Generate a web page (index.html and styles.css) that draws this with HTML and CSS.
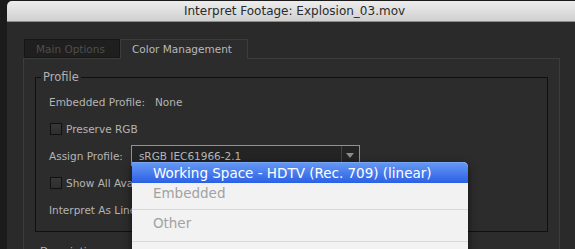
FILE: index.html
```html
<!DOCTYPE html>
<html>
<head>
	<title>Interpret Footage</title>
	<link rel="stylesheet" href="styles.css">
</head>
<body>
	<div class="desk">
		<div class="window">
			<div class="titlebar">Interpret Footage: Explosion_03.mov</div>
			<div class="content">
				<div class="tabs">
					<div class="tab tab-main">Main Options</div>
					<div class="tab tab-color">Color Management</div>
				</div>
				<div class="panel">
					<fieldset class="group">
						<legend>Profile</legend>
						<div class="row">
							<span class="label">Embedded Profile:</span>
							<span class="value">None</span>
						</div>
						<div class="row">
							<span class="check"></span>Preserve RGB
						</div>
						<div class="row">
							<span class="label">Assign Profile:</span>
							<div class="select">
								<span class="select-text">sRGB IEC61966-2.1</span>
								<span class="select-arrow"></span>
								<div class="menu">
									<div class="menu-item selected">Working Space - HDTV (Rec. 709) (linear)</div>
									<div class="menu-item disabled">Embedded</div>
									<div class="menu-sep"></div>
									<div class="menu-item disabled">Other</div>
									<div class="menu-sep last"></div>
									<div class="menu-item"><b>Adobe</b> <span class="dim">HDTV (Rec. 709)</span></div>
								</div>
							</div>
						</div>
						<div class="row">
							<span class="check"></span>Show All Available Profiles
						</div>
						<div class="row">
							<span class="label">Interpret As Linear Light:</span>
						</div>
					</fieldset>
					<div class="section">Description</div>
				</div>
			</div>
		</div>
	</div>
</body>
</html>
```

FILE: styles.css
```css
* {
	box-sizing: border-box;
}

body {
	margin: 0;
	width: 575px;
	height: 249px;
	overflow: hidden;
	background-color: #1b1b1b;
	font-family: "DejaVu Sans", sans-serif;
	font-size: 10.5px;
	color: #b4b4b4;
}

.desk {
	padding: 1px 0 0 7px;
}

.window {
	width: 575px;
	height: 260px;
	background-color: #2a2a2a;
	border-radius: 5px 0 0 0;
	overflow: hidden;
}

.titlebar {
	height: 21px;
	line-height: 20px;
	text-align: center;
	font-size: 12px;
	color: #2a2a2a;
	background: linear-gradient(#ededed, #d0d0d0);
	border-bottom: 1px solid #8c8c8c;
}

.content {
	padding: 17px 0 0 16px;
}

.tabs {
	display: flex;
	margin-left: 1px;
	height: 19px;
}

.tab {
	height: 19px;
	line-height: 18px;
	padding-left: 11px;
}

.tab-main {
	width: 96px;
	background-color: #1f1f1f;
	border: 1px solid #161616;
	color: #4e4e4e;
}

.tab-color {
	width: 128px;
	height: 20px;
	background-color: #2c2c2c;
	border: 1px solid #3c3c3c;
	border-bottom: none;
	color: #b8b8b8;
}

.panel {
	width: 537px;
	height: 220px;
	border: 1px solid #3c3c3c;
	background-color: #2c2c2c;
}

.group {
	margin: 11px 11px 0 11px;
	padding: 4px 0 8px 0;
	border: 1px solid #101010;
	min-width: 0;
}

.group legend {
	margin-left: 5px;
	padding: 0 2px;
	line-height: 14px;
	font-size: 11.5px;
	color: #b0b0b0;
}

.row {
	display: flex;
	align-items: center;
	height: 27px;
	padding-left: 13px;
	white-space: nowrap;
}

.value {
	margin-left: 10px;
}

.check {
	width: 12px;
	height: 12px;
	margin: 0 4px 0 1px;
	border: 1px solid #111;
	background: linear-gradient(#383838, #2e2e2e);
}

.select {
	position: relative;
	display: flex;
	align-items: center;
	width: 229px;
	height: 21px;
	margin-left: 8px;
	border: 1px solid #c98a22;
	background-color: #242424;
}

.select-text {
	flex: 1;
	padding-left: 7px;
	color: #b8b8b8;
}

.select-arrow {
	width: 18px;
	height: 19px;
	border-left: 1px solid #444;
	display: flex;
	align-items: center;
	justify-content: center;
}

.select-arrow::after {
	content: "";
	border-left: 4px solid transparent;
	border-right: 4px solid transparent;
	border-top: 5px solid #8c8c8c;
}

.menu {
	position: absolute;
	left: 0;
	top: 16px;
	width: 336px;
	height: 110px;
	background-color: #f2f2f2;
	border-radius: 0 5px 0 0;
	box-shadow: 0 3px 10px rgba(0, 0, 0, 0.55);
	font-size: 13.5px;
	color: #222;
	z-index: 2;
}

.menu-item {
	height: 20px;
	line-height: 20px;
	padding-left: 21px;
}

.menu-item.selected {
	height: 21px;
	line-height: 21px;
	color: #fff;
	background: linear-gradient(#6497f3, #2b60e6);
	border-top: 1px solid #7aa6f6;
	border-radius: 0 5px 0 0;
}

.menu-item.disabled {
	color: #a2a2a2;
}

.menu-item .dim {
	color: #8a8a8a;
}

.menu-sep {
	height: 1px;
	margin: 6px 0 3px;
	background-color: #d8d8d8;
}

.menu-sep.last {
	margin: 8px 0 5px;
}

.section {
	margin: 12px 0 0 16px;
	line-height: 14px;
	color: #b4b4b4;
}
```
